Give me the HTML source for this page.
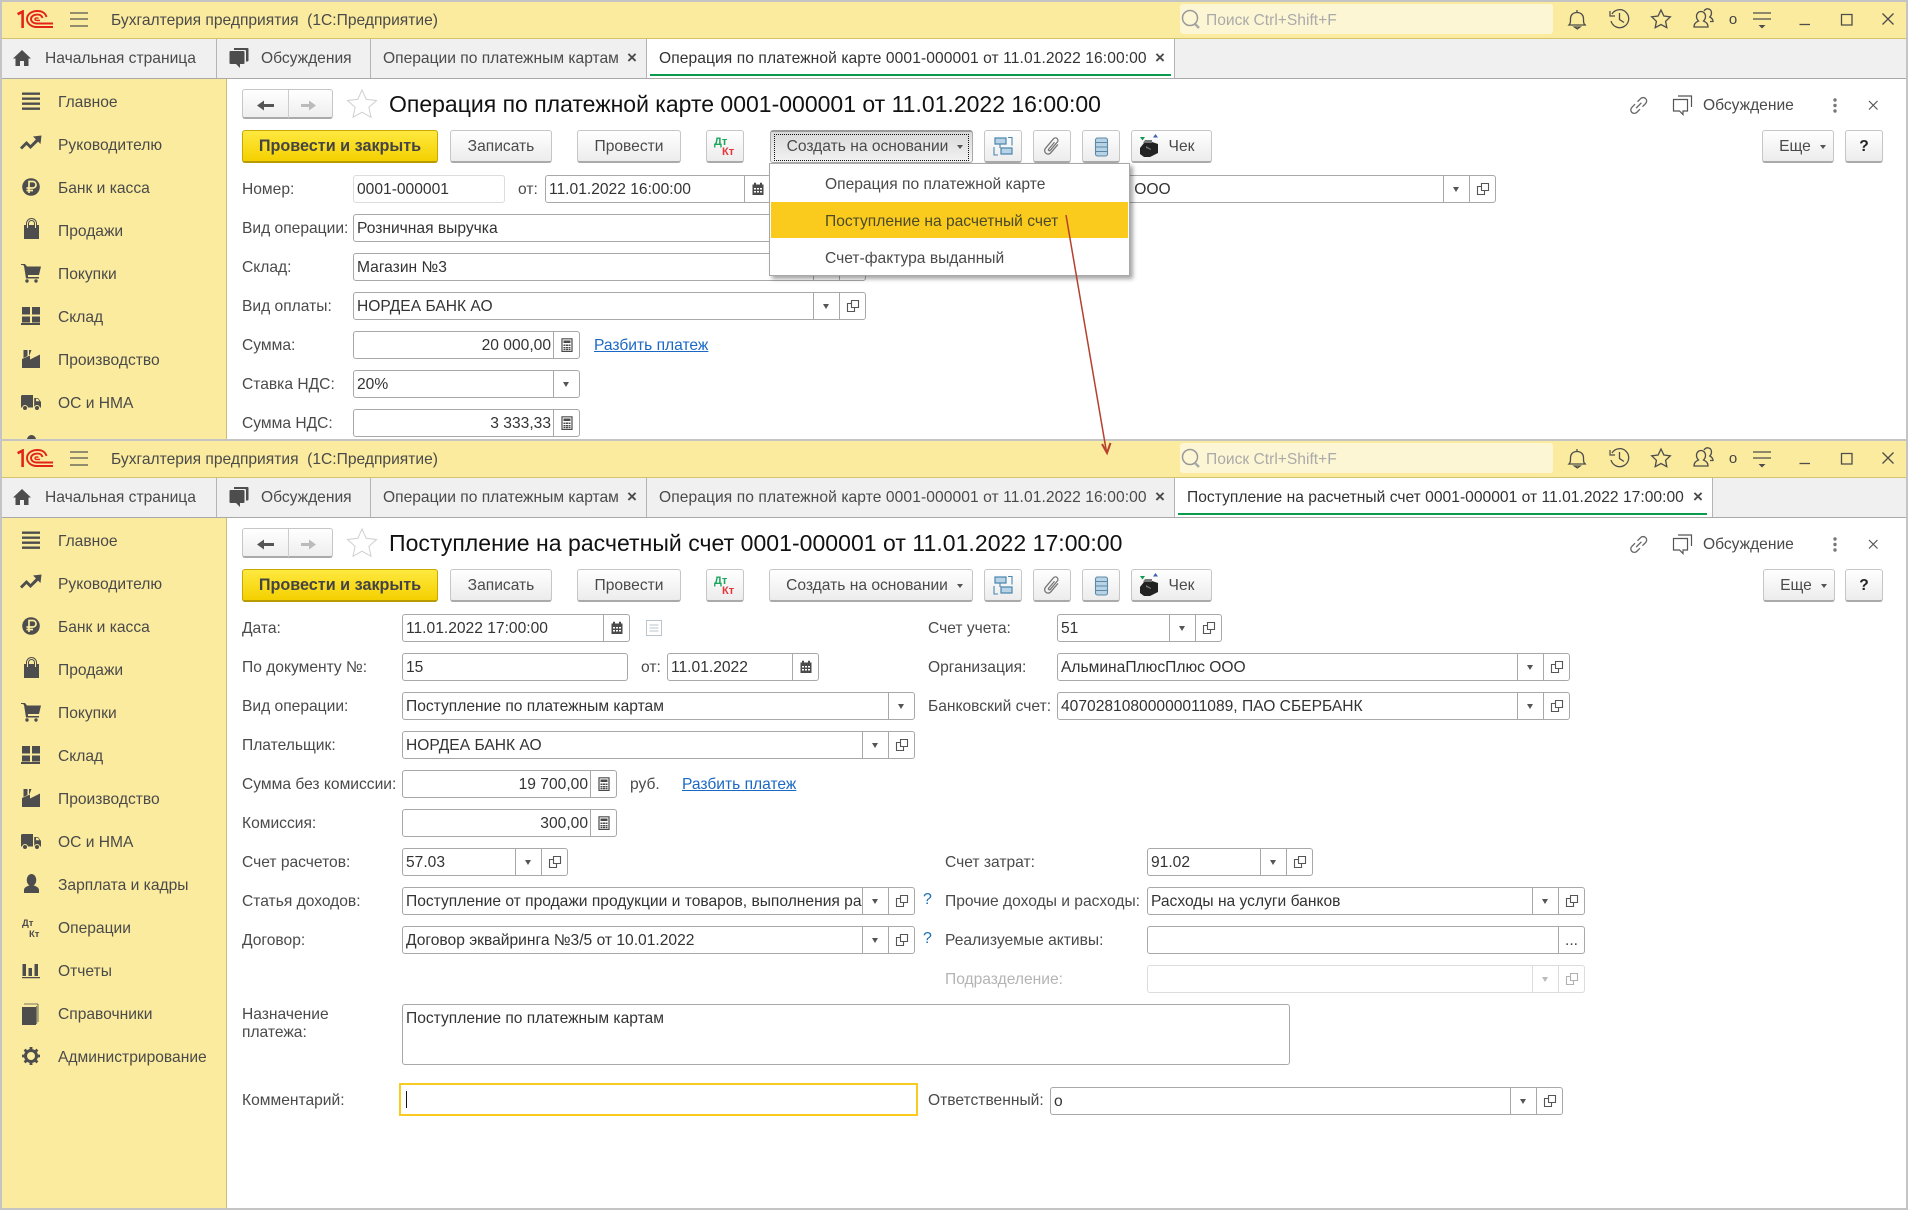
<!DOCTYPE html>
<html lang="ru">
<head>
<meta charset="utf-8">
<title>Бухгалтерия предприятия</title>
<style>
*{box-sizing:border-box}
html,body{margin:0;padding:0;background:#fff;width:1908px;height:1218px;overflow:hidden;font-family:"Liberation Sans","DejaVu Sans",sans-serif;font-size:15.6px;color:#333}
.win{position:absolute;left:0;width:1908px;overflow:hidden;background:#fff}
.frame{position:absolute;left:0;right:0;top:0;bottom:0;border:2px solid #c4c4c4;pointer-events:none;z-index:30}
.hdr{position:absolute;left:2px;top:2px;width:1904px;height:37px;background:#fbeb9e;border-bottom:1px solid #d4c36b}
.search{position:absolute;left:1180px;top:4px;width:373px;height:30px;background:#fdf6d4;border-radius:3px}
.tabs{position:absolute;left:2px;top:39px;width:1904px;height:40px;background:#f0f0f0;border-bottom:1px solid #a9a9a9}
.sep{position:absolute;top:39px;width:1px;height:39px;background:#b4b4b4}
.act{position:absolute;top:39px;height:39px;background:#fff}
.grn{position:absolute;top:74px;height:2px;background:#0c9a4c}
.side{position:absolute;left:2px;top:79px;width:225px;background:#fbeb9e;border-right:1px solid #cdbd77}
.t{position:absolute;white-space:nowrap;line-height:20px;color:#4a4a4a;margin-top:1px}
.x{position:absolute;font-size:17px;line-height:20px;font-weight:bold;color:#4a4a4a;margin-top:1px}
.abs{position:absolute}
.btn{position:absolute;top:130px;height:33px;background:linear-gradient(#fff,#ececec);border:1px solid #c6c6c6;border-bottom:2px solid #aaa;border-radius:3px;text-align:center;line-height:31px;color:#4a4a4a;white-space:nowrap}
.pri{background:linear-gradient(#ffe93f,#f4d000);border:1px solid #c7a900;border-bottom:2px solid #b79b00;font-weight:bold;color:#444;font-size:16.2px}
.foc{background:linear-gradient(#d9d9d9,#f2f2f2);border:1px solid #aaa;border-top:2px solid #999;line-height:29px}
.foc:after{content:"";position:absolute;left:3px;right:3px;top:2px;bottom:1px;border:1px dotted #111}
.car{display:inline-block;width:0;height:0;border-left:3.5px solid transparent;border-right:3.5px solid transparent;border-top:4px solid #555;margin-left:9px;vertical-align:2px}
.f{position:absolute;height:28px;border:1px solid #a8a8a8;border-radius:3px;background:#fff;display:flex;line-height:27px;color:#333;white-space:nowrap}
.f>span{flex:1;overflow:hidden;padding-left:3px;min-width:0}
.f>span.r{text-align:right;padding:0 2px 0 0}
.f>i{flex:none;width:26px;border-left:1px solid #a8a8a8;position:relative;display:block;font-style:normal}
.f>i svg{position:absolute;left:6px;top:6px;width:14px;height:14px}
.dd:after{content:"";position:absolute;left:9px;top:11px;border-left:3.5px solid transparent;border-right:3.5px solid transparent;border-top:5px solid #555}
.lite{border-color:#dcdcdc}
.lite>i{border-color:#dcdcdc}
.lite .dd:after{border-top-color:#bbb}
.lite svg{opacity:.45}
.menu{position:absolute;left:769px;top:163px;width:361px;height:113px;background:#fff;border:1px solid #a8a8a8;box-shadow:3px 3px 4px rgba(0,0,0,.35);z-index:10}
.menu div{position:absolute;left:1px;right:1px;height:36px;padding-left:54px;color:#4a4a4a}
.menu .h{background:#facb1d;color:#4a4a2a}
a{color:#1b68c4;text-decoration:underline}
.q{position:absolute;color:#1a6fb5;font-size:16px;line-height:20px}
</style>
</head>
<body>
<svg width="0" height="0" style="position:absolute">
<defs>
<symbol id="copy" viewBox="0 0 14 14"><path d="M5.5 1.5h7v7h-7z M5.5 4.5h-4v8h7v-4" fill="none" stroke="#555" stroke-width="1.1"/></symbol>
<symbol id="cal" viewBox="0 0 14 14"><path d="M1.5 2.5h11v10.5h-11z" fill="#4a4a4a"/><path d="M4 .8v3M10 .8v3" stroke="#4a4a4a" stroke-width="2"/><path d="M3 6h2v1.5H3zM6 6h2v1.5H6zM9 6h2v1.5H9zM3 9h2v1.5H3zM6 9h2v1.5H6zM9 9h2v1.5H9z" fill="#fff"/></symbol>
<symbol id="calc" viewBox="0 0 14 14"><path d="M2 .8h10v12.7H2z" fill="#fff" stroke="#4a4a4a" stroke-width="1.2"/><path d="M3.5 2.5h7v2.5h-7zM3.5 6.5h2v1.5h-2zM6 6.5h2v1.5H6zM8.5 6.5h2v1.5h-2zM3.5 9h2v1.5h-2zM6 9h2v1.5H6zM8.5 9h2v1.5h-2zM3.5 11h2v1.2h-2zM6 11h2v1.2H6zM8.5 11h2v1.2h-2z" fill="#4a4a4a"/></symbol>
<symbol id="logo" viewBox="0 0 36 18"><g fill="none" stroke="#e2231a"><path d="M.6 4.2 5.6 1.6V18" stroke-width="2.6"/><path d="M29.5 7C28.5 3.2 25 1 20.5 1 14.5 1 10 4.4 10 9s4.5 8 9.5 8H36" stroke-width="1.9"/><path d="M25.5 8C24.8 5.8 23 4.6 20.5 4.6 16.7 4.6 14 6.4 14 9s2.7 4.5 5.5 4.5H36" stroke-width="1.9"/><path d="M21.5 8.5c-.5-.5-1-.6-1.5-.6-1.3 0-2 .5-2 1.200s.7 1.300 2 1.300h3" stroke-width="1.4"/></g></symbol>
<symbol id="side" viewBox="0 0 60 640">
<g fill="#4d4d4d" stroke="none">
<path d="M22 92.5h18v2.400H22zM22 97.5h18v2.400H22zM22 102.5h18v2.400H22zM22 107.5h18v2.400H22z"/>
<path d="M33 136.5l8.500-1-1 8.500-2.400-2.400-7.600 7.400-4-4-4.500 4.500-2-2 6.500-6.500 4 4 5.400-5.600z"/>
<circle cx="31" cy="187" r="8.800"/>
<path d="M24 225h15v14H24z"/>
<path d="M21 264h4l2 2.500H41l-2 8.500H28v2h11v1.500H26l-2-12.500-1-1h-2z"/><circle cx="27" cy="281" r="1.700"/><circle cx="36" cy="281" r="1.700"/>
<path d="M22 307h8v7.500h-8zM32 307h8v7.500h-8zM22 316.500h8v6h-8zM32 316.500h8v6h-8zM21 323h19v2H21z"/>
<path d="M22 368V359l8-3.500v4l10-5V368zM23.500 350h4v6l-4 2zM29 350h2.500l-2 5H29z"/>
<path d="M21 396.500a1.500 1.500 0 011.500-1.500H33v12.500H21zM34.200 398h3.800l3 4v5.500h-6.800z"/>
<ellipse cx="31.500" cy="441" rx="4.800" ry="6"/><path d="M24 454v-3c0-3 4-4 5-4.500h5c1 .5 5 1.500 5 4.500v3z"/>
<path d="M22.500 525h3.500v12h-3.500zM28.500 529h3.500v8h-3.500zM34.500 525h3.500v12h-3.500zM22 538h18v1.200H22z"/>
<path d="M22 568h14v18H22z"/>
</g>
<path d="M38 565v18M24 565h14M36.700 567v18" fill="none" stroke="#4d4d4d" stroke-width=".8"/>
<path d="M36 398.700h1.800l1.700 2.500H36z" fill="#fbeb9e"/>
<g fill="#4d4d4d" stroke="#fbeb9e" stroke-width="1"><circle cx="25" cy="408" r="2.500"/><circle cx="37" cy="408" r="2.500"/></g>
<path d="M29 193V181.500h3.800a3.200 3.200 0 010 6.500H26.500M26.500 190.500h6.500" fill="none" stroke="#fbeb9e" stroke-width="1.700"/>
<path d="M27.500 228v-4.500a4 4 0 018 0V228" fill="none" stroke="#4d4d4d" stroke-width="3"/>
<path d="M27.500 228v-4.500a4 4 0 018 0V228" fill="none" stroke="#fbeb9e" stroke-width="1"/>
<circle cx="31" cy="617" r="5.500" fill="none" stroke="#4d4d4d" stroke-width="3"/>
<path d="M31 608v3.500M31 622.500v3.500M22 617h3.500M36.500 617h3.500M24.600 610.600l2.500 2.500M34.900 620.900l2.500 2.500M37.400 610.600l-2.500 2.500M27.100 620.900l-2.500 2.500" stroke="#4d4d4d" stroke-width="2.800"/>
<text x="22" y="487" font-family="Liberation Sans" font-weight="bold" font-size="9.500" fill="#4d4d4d">Дт</text>
<text x="29" y="498" font-family="Liberation Sans" font-weight="bold" font-size="9.500" fill="#4d4d4d">Кт</text>
</symbol>
<symbol id="home" viewBox="0 0 18 16"><path d="M9 0 18 8.500h-2.500V16H11v-5H7v5H2.500V8.500H0z" fill="#4d4d4d"/></symbol>
<symbol id="disc" viewBox="0 0 20 20"><path d="M5 0h13.500a1 1 0 011 1v11.500a1 1 0 01-1 1H17V3a1 1 0 00-1-1H5z" fill="#4d4d4d"/><path d="M1.500 3H14.500a1 1 0 011 1v11a1 1 0 01-1 1H11v4l-4-4H1.500a1 1 0 01-1-1V4a1 1 0 011-1z" fill="#4d4d4d"/></symbol>
<symbol id="bar" viewBox="0 0 1908 120">
<g fill="none" stroke="#4d4d4d" stroke-width="1.300">
<path d="M1569 25c1.500-1.500 1.500-3 1.500-6 0-4 2.500-6.500 6.500-6.500s6.500 2.500 6.500 6.500c0 3 0 4.500 1.500 6zM1569 25h17M1574.500 27h5.500l-2.700 2zM1577 12.500v-2.500"/>
<path d="M1612 14a9 9 0 11-1 7M1619.500 13v6.500l4.500 3"/><path d="M1610 11v5h5" stroke-width="1.200"/>
<path d="M1661 10l2.900 6 6.400.8-4.700 4.500 1.200 6.400-5.800-3.200-5.800 3.200 1.200-6.400-4.700-4.500 6.400-.8z"/>
<path d="M1694 27c0-4 2.500-5 4.500-6-1.500-1.500-2-2.500-2-4.500 0-3 2-5 4.500-5s4.500 2 4.500 5c0 2-.5 3-2 4.500 2 1 4.500 2 4.500 6zM1704 11c1-1.500 2-2.200 3.500-2.200 2.500 0 4 1.800 4 4.200 0 2-.7 3-1.700 4 2 1 3.200 2 3.200 4.500h-3"/>
<path d="M1753 13h18M1753 19h18"/>
<path d="M1799.500 24.500h10.500"/>
<path d="M1841.500 14.500h10.500v10.500h-10.500z"/>
<path d="M1882.500 13.500l11 11M1893.500 13.500l-11 11"/>
</g>
<path d="M1758.500 25h7l-3.500 3.500z" fill="#4d4d4d"/>
<text x="1733" y="24" text-anchor="middle" font-family="Liberation Sans" font-size="15" fill="#444">о</text>
<circle cx="1190" cy="18" r="7.500" fill="none" stroke="#999" stroke-width="1.500"/><path d="M1195 24l4 4" stroke="#aaa" stroke-width="2.500"/>
</symbol>
<symbol id="tool" viewBox="0 0 1908 200">
<path d="M270 104h-6v-3.500l-7 5 7 5v-3.500h10v-3z" fill="#555"/>
<path d="M301 104h8v-3.500l7 5-7 5v-3.500h-8z" fill="#bbb"/>
<path d="M362 90l4.200 9.300 10.300 1.200-7.600 6.800 2.100 10-9-5.100-9 5.100 2.100-10-7.600-6.800 10.300-1.200z" fill="#fff" stroke="#cfcfcf" stroke-width="1"/>
<g transform="rotate(-45 1638.700 105.500)" fill="none" stroke="#666" stroke-width="1.300"><path d="M1637 102H1632.500a3.500 3.500 0 000 7H1637"/><path d="M1640.500 102H1645a3.500 3.500 0 010 7H1640.500"/><path d="M1635 105.500h7.500"/></g>
<path d="M1678 96h13.500v11" fill="none" stroke="#555" stroke-width="1.200"/><path d="M1673.500 99.500h14v11.500h-4.500v3.500l-3.500-3.500h-6z" fill="#fff" stroke="#555" stroke-width="1.200"/>
<circle cx="1835" cy="100" r="1.700" fill="#777"/><circle cx="1835" cy="105.500" r="1.700" fill="#777"/><circle cx="1835" cy="111" r="1.700" fill="#777"/>
<path d="M1869 101l8.500 8.500M1877.500 101l-8.500 8.500" stroke="#555" stroke-width="1.200"/>
<path d="M995 138h11v6h-11zM1001 148h11v6h-11z" fill="#b9d3e6" stroke="#4b86b0" stroke-width="1.200"/><path d="M1008 137.500h4v8M994 147v8h4M1000 144v4" fill="none" stroke="#4b86b0" stroke-width="1.100"/>
<path transform="rotate(40 1052 146)" d="M1055.500 141v11a3.500 3.500 0 01-7 0v-12.500a2.500 2.500 0 015 0v11a1 1 0 01-2 0v-9" fill="none" stroke="#777" stroke-width="1.300"/>
<rect x="1095.500" y="138" width="12" height="18" rx="2" fill="#b9d3e6" stroke="#5d88a6" stroke-width="1.100"/><path d="M1095.500 142.500h12M1095.500 147h12M1095.500 151.500h12" stroke="#5d88a6" stroke-width="1.100"/>
<path d="M1140 148l4-5 8-1 6 2v9l-8 4h-6l-4-3z" fill="#222"/><path d="M1143 143l2-3h7v3zM1146 146l5 3v1l-5-2z" fill="#777"/><path d="M1140 137h5l-2.500 3.500z" fill="#0c9a4c"/><path d="M1153 137.500l2.500-3.500 2.500 3.500z" fill="#3a62b3"/>
<text x="714" y="145" font-family="Liberation Sans" font-weight="bold" font-size="11" fill="#1ca65c">Дт</text>
<text x="722" y="155" font-family="Liberation Sans" font-weight="bold" font-size="11" fill="#e5343a">Кт</text>
</symbol>
</defs>
</svg>

<!-- ================= WINDOW 1 ================= -->
<div class="win" style="top:0;height:441px">
<div class="hdr"></div>
<div class="search"></div>
<svg class="abs" style="left:0;top:0" width="1908" height="120"><use href="#bar"/></svg>
<svg class="abs" style="left:17px;top:10px" width="36" height="18"><use href="#logo"/></svg>
<svg class="abs" style="left:70px;top:12px" width="18" height="15"><path d="M0 1h18M0 7h18M0 14h18" stroke="#555" stroke-width="1.2"/></svg>
<div class="t" style="left:111px;top:10px">Бухгалтерия предприятия&nbsp; (1С:Предприятие)</div>
<div class="t" style="left:1206px;top:10px;color:#aaa">Поиск Ctrl+Shift+F</div>

<div class="tabs"></div>
<div class="act" style="left:647px;width:527px"></div>
<div class="grn" style="left:650px;width:521px"></div>
<div class="sep" style="left:216px"></div><div class="sep" style="left:370px"></div><div class="sep" style="left:646px"></div><div class="sep" style="left:1174px"></div>
<svg class="abs" style="left:13px;top:50px" width="18" height="16"><use href="#home"/></svg>
<svg class="abs" style="left:229px;top:48px" width="20" height="20"><use href="#disc"/></svg>
<div class="t" style="left:45px;top:48px">Начальная страница</div>
<div class="t" style="left:261px;top:48px">Обсуждения</div>
<div class="t" style="left:383px;top:48px">Операции по платежным картам</div>
<div class="x" style="left:627px;top:47px">×</div>
<div class="t" style="left:659px;top:48px;color:#333;letter-spacing:.08px">Операция по платежной карте 0001-000001 от 11.01.2022 16:00:00</div>
<div class="x" style="left:1155px;top:47px">×</div>

<div class="side" style="height:360px"></div>
<svg class="abs" style="left:0;top:0" width="60" height="439" viewBox="0 0 60 439"><use href="#side" width="60" height="640"/></svg>
<div class="t" style="left:58px;top:92px">Главное</div>
<div class="t" style="left:58px;top:135px">Руководителю</div>
<div class="t" style="left:58px;top:178px">Банк и касса</div>
<div class="t" style="left:58px;top:221px">Продажи</div>
<div class="t" style="left:58px;top:264px">Покупки</div>
<div class="t" style="left:58px;top:307px">Склад</div>
<div class="t" style="left:58px;top:350px">Производство</div>
<div class="t" style="left:58px;top:393px">ОС и НМА</div>

<div class="abs" style="left:242px;top:89px;width:91px;height:30px;border:1px solid #c6c6c6;border-bottom:2px solid #aaa;border-radius:3px;background:linear-gradient(#fff,#eee)"></div>
<div class="abs" style="left:288px;top:90px;width:1px;height:28px;background:#ccc"></div>
<svg class="abs" style="left:0;top:0;z-index:2" width="1908" height="200"><use href="#tool"/></svg>
<div class="t" style="left:389px;top:90px;font-size:23px;line-height:26px;color:#111">Операция по платежной карте 0001-000001 от 11.01.2022 16:00:00</div>
<div class="t" style="left:1703px;top:95px">Обсуждение</div>

<div class="btn pri" style="left:242px;width:196px">Провести и закрыть</div>
<div class="btn" style="left:450px;width:102px">Записать</div>
<div class="btn" style="left:577px;width:104px">Провести</div>
<div class="btn" style="left:706px;width:38px"></div>
<div class="btn foc" style="left:770px;width:203px;padding-left:7px">Создать на основании<span class="car"></span></div>
<div class="btn" style="left:984px;width:38px"></div>
<div class="btn" style="left:1033px;width:38px"></div>
<div class="btn" style="left:1082px;width:38px"></div>
<div class="btn" style="left:1131px;width:81px;padding-left:20px">Чек</div>
<div class="btn" style="left:1762px;width:72px;padding-left:9px">Еще<span class="car"></span></div>
<div class="btn" style="left:1845px;width:38px;color:#222;font-weight:bold">?</div>

<div class="t" style="left:242px;top:179px">Номер:</div>
<div class="f lite" style="left:353px;top:175px;width:152px"><span>0001-000001</span></div>
<div class="t" style="left:518px;top:179px">от:</div>
<div class="f" style="left:545px;top:175px;width:226px"><span>11.01.2022 16:00:00</span><i><svg><use href="#cal"/></svg></i></div>
<div class="f" style="left:982px;top:175px;width:514px"><span>АльминаПлюсПлюс ООО</span><i class="dd"></i><i><svg><use href="#copy"/></svg></i></div>

<div class="t" style="left:242px;top:218px">Вид операции:</div>
<div class="f" style="left:353px;top:214px;width:513px"><span>Розничная выручка</span><i class="dd"></i></div>
<div class="t" style="left:242px;top:257px">Склад:</div>
<div class="f" style="left:353px;top:253px;width:513px"><span>Магазин №3</span><i class="dd"></i><i><svg><use href="#copy"/></svg></i></div>
<div class="t" style="left:242px;top:296px">Вид оплаты:</div>
<div class="f" style="left:353px;top:292px;width:513px"><span>НОРДЕА БАНК АО</span><i class="dd"></i><i><svg><use href="#copy"/></svg></i></div>
<div class="t" style="left:242px;top:335px">Сумма:</div>
<div class="f" style="left:353px;top:331px;width:227px"><span class="r">20 000,00</span><i><svg><use href="#calc"/></svg></i></div>
<div class="t" style="left:594px;top:335px"><a>Разбить платеж</a></div>
<div class="t" style="left:242px;top:374px">Ставка НДС:</div>
<div class="f" style="left:353px;top:370px;width:227px"><span>20%</span><i class="dd"></i></div>
<div class="t" style="left:242px;top:413px">Сумма НДС:</div>
<div class="f" style="left:353px;top:409px;width:227px"><span class="r">3 333,33</span><i><svg><use href="#calc"/></svg></i></div>

<div class="menu">
<div style="top:2px;line-height:38px">Операция по платежной карте</div>
<div class="h" style="top:38px;line-height:40px">Поступление на расчетный счет</div>
<div style="top:75px;line-height:40px">Счет-фактура выданный</div>
</div>
<div class="frame" style="bottom:-2px"></div>
<div class="abs" style="left:0;top:439px;width:1908px;height:2px;background:#c4c4c4;z-index:31"></div>
</div>

<!-- ================= WINDOW 2 ================= -->
<div class="win" style="top:439px;height:771px">
<div class="hdr"></div>
<div class="search"></div>
<svg class="abs" style="left:0;top:0" width="1908" height="120"><use href="#bar"/></svg>
<svg class="abs" style="left:17px;top:10px" width="36" height="18"><use href="#logo"/></svg>
<svg class="abs" style="left:70px;top:12px" width="18" height="15"><path d="M0 1h18M0 7h18M0 14h18" stroke="#555" stroke-width="1.2"/></svg>
<div class="t" style="left:111px;top:10px">Бухгалтерия предприятия&nbsp; (1С:Предприятие)</div>
<div class="t" style="left:1206px;top:10px;color:#aaa">Поиск Ctrl+Shift+F</div>

<div class="tabs"></div>
<div class="act" style="left:1175px;width:537px"></div>
<div class="grn" style="left:1178px;width:529px"></div>
<div class="sep" style="left:216px"></div><div class="sep" style="left:370px"></div><div class="sep" style="left:646px"></div><div class="sep" style="left:1174px"></div><div class="sep" style="left:1712px"></div>
<svg class="abs" style="left:13px;top:50px" width="18" height="16"><use href="#home"/></svg>
<svg class="abs" style="left:229px;top:48px" width="20" height="20"><use href="#disc"/></svg>
<div class="t" style="left:45px;top:48px">Начальная страница</div>
<div class="t" style="left:261px;top:48px">Обсуждения</div>
<div class="t" style="left:383px;top:48px">Операции по платежным картам</div>
<div class="x" style="left:627px;top:47px">×</div>
<div class="t" style="left:659px;top:48px;letter-spacing:.08px">Операция по платежной карте 0001-000001 от 11.01.2022 16:00:00</div>
<div class="x" style="left:1155px;top:47px">×</div>
<div class="t" style="left:1187px;top:48px;color:#333;letter-spacing:.02px">Поступление на расчетный счет 0001-000001 от 11.01.2022 17:00:00</div>
<div class="x" style="left:1693px;top:47px">×</div>

<div class="side" style="height:690px"></div>
<svg class="abs" style="left:0;top:0" width="60" height="640" viewBox="0 0 60 640"><use href="#side" width="60" height="640"/></svg>
<div class="t" style="left:58px;top:92px">Главное</div>
<div class="t" style="left:58px;top:135px">Руководителю</div>
<div class="t" style="left:58px;top:178px">Банк и касса</div>
<div class="t" style="left:58px;top:221px">Продажи</div>
<div class="t" style="left:58px;top:264px">Покупки</div>
<div class="t" style="left:58px;top:307px">Склад</div>
<div class="t" style="left:58px;top:350px">Производство</div>
<div class="t" style="left:58px;top:393px">ОС и НМА</div>
<div class="t" style="left:58px;top:436px">Зарплата и кадры</div>
<div class="t" style="left:58px;top:479px">Операции</div>
<div class="t" style="left:58px;top:522px">Отчеты</div>
<div class="t" style="left:58px;top:565px">Справочники</div>
<div class="t" style="left:58px;top:608px">Администрирование</div>

<div class="abs" style="left:242px;top:89px;width:91px;height:30px;border:1px solid #c6c6c6;border-bottom:2px solid #aaa;border-radius:3px;background:linear-gradient(#fff,#eee)"></div>
<div class="abs" style="left:288px;top:90px;width:1px;height:28px;background:#ccc"></div>
<svg class="abs" style="left:0;top:0;z-index:2" width="1908" height="200"><use href="#tool"/></svg>
<div class="t" style="left:389px;top:90px;font-size:23px;line-height:26px;color:#111;letter-spacing:.04px">Поступление на расчетный счет 0001-000001 от 11.01.2022 17:00:00</div>
<div class="t" style="left:1703px;top:95px">Обсуждение</div>

<div class="btn pri" style="left:242px;width:196px">Провести и закрыть</div>
<div class="btn" style="left:450px;width:102px">Записать</div>
<div class="btn" style="left:577px;width:104px">Провести</div>
<div class="btn" style="left:706px;width:38px"></div>
<div class="btn" style="left:769px;width:204px;padding-left:7px">Создать на основании<span class="car"></span></div>
<div class="btn" style="left:984px;width:38px"></div>
<div class="btn" style="left:1033px;width:38px"></div>
<div class="btn" style="left:1082px;width:38px"></div>
<div class="btn" style="left:1131px;width:81px;padding-left:20px">Чек</div>
<div class="btn" style="left:1763px;width:72px;padding-left:9px">Еще<span class="car"></span></div>
<div class="btn" style="left:1845px;width:38px;color:#222;font-weight:bold">?</div>

<div class="t" style="left:242px;top:179px">Дата:</div>
<div class="f" style="left:402px;top:175px;width:228px"><span>11.01.2022 17:00:00</span><i><svg><use href="#cal"/></svg></i></div>
<svg class="abs" style="left:646px;top:181px" width="16" height="16"><path d="M.5.5h15v15H.5z M3.5 5h9M3.5 8h9M3.5 11h9" fill="none" stroke="#b9c4cc"/></svg>

<div class="t" style="left:242px;top:218px">По документу №:</div>
<div class="f" style="left:402px;top:214px;width:226px"><span>15</span></div>
<div class="t" style="left:641px;top:218px">от:</div>
<div class="f" style="left:667px;top:214px;width:152px"><span>11.01.2022</span><i><svg><use href="#cal"/></svg></i></div>

<div class="t" style="left:242px;top:257px">Вид операции:</div>
<div class="f" style="left:402px;top:253px;width:513px"><span>Поступление по платежным картам</span><i class="dd"></i></div>
<div class="t" style="left:242px;top:296px">Плательщик:</div>
<div class="f" style="left:402px;top:292px;width:513px"><span>НОРДЕА БАНК АО</span><i class="dd"></i><i><svg><use href="#copy"/></svg></i></div>
<div class="t" style="left:242px;top:335px">Сумма без комиссии:</div>
<div class="f" style="left:402px;top:331px;width:215px"><span class="r">19 700,00</span><i><svg><use href="#calc"/></svg></i></div>
<div class="t" style="left:630px;top:335px">руб.</div>
<div class="t" style="left:682px;top:335px"><a>Разбить платеж</a></div>
<div class="t" style="left:242px;top:374px">Комиссия:</div>
<div class="f" style="left:402px;top:370px;width:215px"><span class="r">300,00</span><i><svg><use href="#calc"/></svg></i></div>
<div class="t" style="left:242px;top:413px">Счет расчетов:</div>
<div class="f" style="left:402px;top:409px;width:166px"><span>57.03</span><i class="dd"></i><i><svg><use href="#copy"/></svg></i></div>
<div class="t" style="left:242px;top:452px">Статья доходов:</div>
<div class="f" style="left:402px;top:448px;width:513px"><span>Поступление от продажи продукции и товаров, выполнения работ, оказания услуг</span><i class="dd"></i><i><svg><use href="#copy"/></svg></i></div>
<div class="q" style="left:923px;top:451px">?</div>
<div class="t" style="left:242px;top:491px">Договор:</div>
<div class="f" style="left:402px;top:487px;width:513px"><span>Договор эквайринга №3/5 от 10.01.2022</span><i class="dd"></i><i><svg><use href="#copy"/></svg></i></div>
<div class="q" style="left:923px;top:490px">?</div>
<div class="t" style="left:242px;top:566px;line-height:18px">Назначение<br>платежа:</div>
<div class="f" style="left:402px;top:565px;width:888px;height:61px"><span>Поступление по платежным картам</span></div>
<div class="t" style="left:242px;top:651px">Комментарий:</div>
<div class="abs" style="left:399px;top:644px;width:519px;height:33px;border:2px solid #f9cb1f;background:#fff"></div>
<div class="abs" style="left:406px;top:652px;width:1px;height:17px;background:#111"></div>

<div class="t" style="left:928px;top:179px">Счет учета:</div>
<div class="f" style="left:1057px;top:175px;width:165px"><span>51</span><i class="dd"></i><i><svg><use href="#copy"/></svg></i></div>
<div class="t" style="left:928px;top:218px">Организация:</div>
<div class="f" style="left:1057px;top:214px;width:513px"><span>АльминаПлюсПлюс ООО</span><i class="dd"></i><i><svg><use href="#copy"/></svg></i></div>
<div class="t" style="left:928px;top:257px">Банковский счет:</div>
<div class="f" style="left:1057px;top:253px;width:513px"><span>40702810800000011089, ПАО СБЕРБАНК</span><i class="dd"></i><i><svg><use href="#copy"/></svg></i></div>

<div class="t" style="left:945px;top:413px">Счет затрат:</div>
<div class="f" style="left:1147px;top:409px;width:166px"><span>91.02</span><i class="dd"></i><i><svg><use href="#copy"/></svg></i></div>
<div class="t" style="left:945px;top:452px">Прочие доходы и расходы:</div>
<div class="f" style="left:1147px;top:448px;width:438px"><span>Расходы на услуги банков</span><i class="dd"></i><i><svg><use href="#copy"/></svg></i></div>
<div class="t" style="left:945px;top:491px">Реализуемые активы:</div>
<div class="f" style="left:1147px;top:487px;width:438px"><span></span><i style="text-align:center;line-height:27px;color:#444">...</i></div>
<div class="t" style="left:945px;top:530px;color:#b4b4b4">Подразделение:</div>
<div class="f lite" style="left:1147px;top:526px;width:438px"><span></span><i class="dd"></i><i><svg><use href="#copy"/></svg></i></div>
<div class="t" style="left:928px;top:651px">Ответственный:</div>
<div class="f" style="left:1050px;top:648px;width:513px"><span>о</span><i class="dd"></i><i><svg><use href="#copy"/></svg></i></div>
<div class="frame"></div>
</div>

<!-- arrow -->
<svg class="abs" style="left:0;top:0;z-index:50;pointer-events:none" width="1908" height="470">
<path d="M1066 215 1106.500 452" stroke="#b5402f" stroke-width="1.500" fill="none"/>
<path d="M1102 444 1107 453 1110.500 443" stroke="#b5402f" stroke-width="2" fill="none"/>
</svg>
</body>
</html>
